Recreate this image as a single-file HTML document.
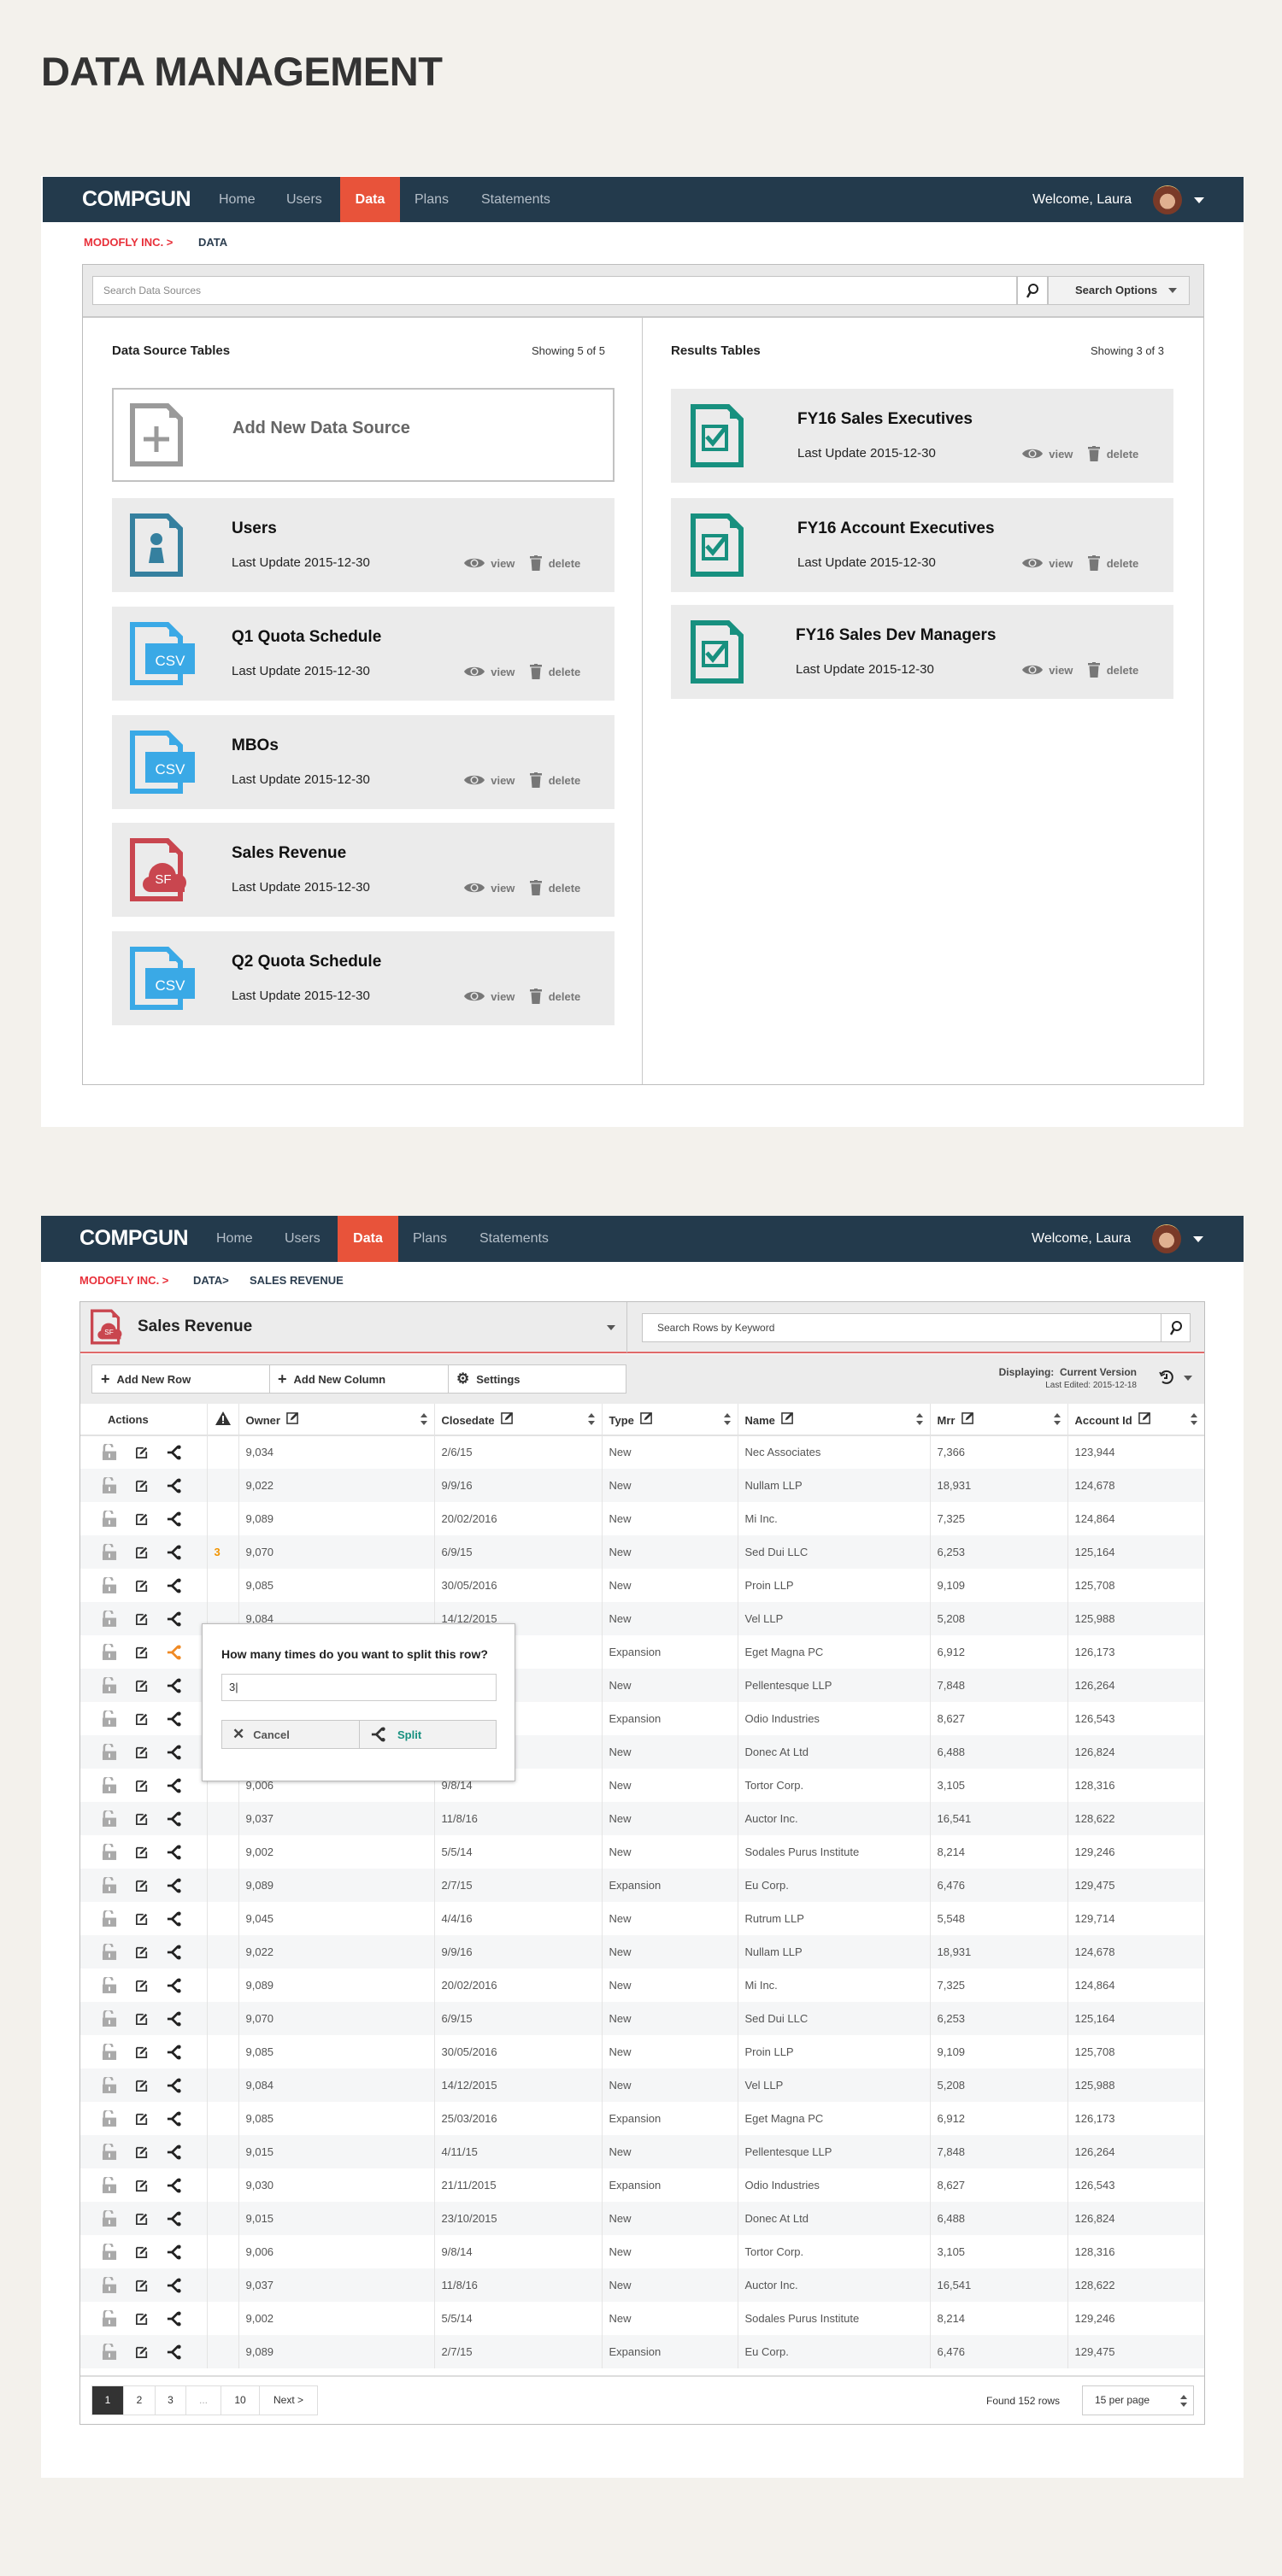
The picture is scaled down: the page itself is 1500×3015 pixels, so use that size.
<!DOCTYPE html>
<html><head><meta charset="utf-8">
<style>
*{box-sizing:border-box;margin:0;padding:0}
body{width:1500px;height:3015px;background:#f3f1ec;font-family:"Liberation Sans",Arial,sans-serif;position:relative;overflow:hidden;color:#222}
.abs{position:absolute}
h1{position:absolute;left:48px;top:56px;font-size:47px;font-weight:bold;color:#333;letter-spacing:-0.5px}
.panel{position:absolute;background:#fff}
.nav{position:absolute;height:53px;background:#233a4c}
.nav .it{position:absolute;top:0;height:53px;line-height:53px;font-size:16px;color:#b4bec8}
.nav .act{background:#e8533a;color:#fff;font-weight:bold;text-align:center}
.logo{position:absolute;top:0;line-height:53px;font-size:25px;font-weight:bold;color:#fff;letter-spacing:-0.5px}
.welcome{position:absolute;line-height:53px;top:0;font-size:16px;color:#fff}
.caret{position:absolute;width:0;height:0;border-left:6px solid transparent;border-right:6px solid transparent;border-top:7px solid #fff}
.bc{position:absolute;font-size:13px;font-weight:bold;color:#2c3e50}
.bc .r{color:#e8303a}
.card{position:absolute;width:588px;height:110px;background:#ebebeb}
.card .ic{position:absolute;left:21px;top:18px}
.card .t{position:absolute;left:140px;top:25px;font-size:19px;font-weight:bold;color:#111}
.card .u{position:absolute;left:140px;top:67px;font-size:15px;color:#222}
.card .v{position:absolute;left:412px;top:67px;font-size:13px;color:#777;font-weight:bold;display:flex;align-items:center}
.tbl{position:absolute;left:94px;top:1643px;border-collapse:collapse;table-layout:fixed;font-size:13px;color:#555}
.tbl td{height:39px;border-left:1px solid #e4e4e4;padding-left:8px;white-space:nowrap;overflow:hidden}
.tbl tr:nth-child(odd) td{background:#f5f6f7}
.tbl tr.h td{background:#fff;height:37px;font-weight:bold;color:#333;border-bottom:2px solid #e2e2e2;position:relative}
.tbl td:first-child{border-left:none}
.hd{display:flex;align-items:center;justify-content:space-between;padding-right:8px}
.acts{display:flex;align-items:center;gap:22px;padding-left:18px}
.btn{position:absolute;background:#fff;border:1px solid #c8c8c8;font-size:13px;font-weight:bold;color:#333;display:flex;align-items:center}
</style></head><body>
<svg width="0" height="0" style="position:absolute">
<defs>
<symbol id="lock" viewBox="0 0 18 20"><path d="M3 9V4a5 5 0 0 1 10 0" fill="none" stroke="#aaa" stroke-width="2.6" transform="translate(-1 0)"/><rect x="0" y="9" width="17" height="11" fill="#aaa"/><rect x="7.5" y="12" width="2" height="5" fill="#fff"/></symbol>
<symbol id="edit" viewBox="0 0 16 16"><path d="M1 2h9M1 2v13h13V7" fill="none" stroke="#333" stroke-width="2"/><path d="M5 11l1-3 7-7 2 2-7 7z" fill="#333"/></symbol>
<symbol id="split" viewBox="0 0 20 20"><path d="M15 2L7 10l8 8" fill="none" stroke="currentColor" stroke-width="3"/><path d="M1 10h7" stroke="currentColor" stroke-width="3"/><circle cx="16" cy="3" r="2.5" fill="currentColor"/><circle cx="16" cy="17" r="2.5" fill="currentColor"/></symbol>
<symbol id="pen" viewBox="0 0 16 16"><rect x="1" y="2" width="13" height="13" fill="none" stroke="#333" stroke-width="1.6"/><path d="M5 11l1-3 7-7 2 2-7 7z" fill="#333"/></symbol>
<symbol id="sort" viewBox="0 0 8 14"><path d="M4 0l4 5H0zM4 14l4-5H0z" fill="#555"/></symbol>
<symbol id="eye" viewBox="0 0 24 14"><path d="M0 7C4 0 20 0 24 7 20 14 4 14 0 7z" fill="#777"/><circle cx="12" cy="7" r="4.5" fill="#ebebeb"/><circle cx="12" cy="7" r="3" fill="#777"/></symbol>
<symbol id="trash" viewBox="0 0 14 18"><rect x="0" y="1" width="14" height="2.5" fill="#777"/><rect x="5" y="0" width="4" height="2" fill="#777"/><path d="M1.5 4.5h11l-1 13.5h-9z" fill="#777"/></symbol>
<symbol id="doc" viewBox="0 0 62 74"><path d="M3 3H44L59 18V71H3Z" fill="none" stroke="currentColor" stroke-width="6"/><path d="M46 8v9h9z" fill="currentColor"/></symbol>
</defs></svg>

<h1>DATA MANAGEMENT</h1>

<!-- PANEL 1 -->
<div class="panel" style="left:48px;top:206px;width:1407px;height:1113px"></div>
<div class="nav" style="left:50px;top:207px;width:1405px">
  <div class="logo" style="left:46px">COMPGUN</div>
  <div class="it" style="left:206px">Home</div>
  <div class="it" style="left:285px">Users</div>
  <div class="it act" style="left:348px;width:70px">Data</div>
  <div class="it" style="left:435px">Plans</div>
  <div class="it" style="left:513px">Statements</div>
  <div class="welcome" style="left:1158px">Welcome, Laura</div>
  <div class="abs" style="left:1299px;top:10px;width:34px;height:34px;border-radius:50%;background:radial-gradient(circle at 50% 55%,#e0b090 0 35%,#7a3a28 36% 70%,#e8c070 71%)"></div>
  <div class="caret" style="left:1347px;top:24px"></div>
</div>
<div class="bc" style="left:98px;top:276px"><span class="r">MODOFLY INC. &gt;</span><span style="position:absolute;left:134px">DATA</span></div>

<div class="abs" style="left:96px;top:309px;width:1313px;height:961px;border:1px solid #bdbdbd;background:#fff"></div>
<div class="abs" style="left:97px;top:310px;width:1311px;height:62px;background:#e9e9e9;border-bottom:2px solid #c9c9c9"></div>
<div class="abs" style="left:108px;top:323px;width:1082px;height:34px;background:#fff;border:1px solid #c4c4c4;font-size:12px;color:#888;line-height:32px;padding-left:12px">Search Data Sources</div>
<div class="abs" style="left:1190px;top:323px;width:36px;height:34px;background:#fff;border:1px solid #c4c4c4"><svg class="abs" style="left:9px;top:7px" width="16" height="20" viewBox="0 0 16 20"><circle cx="9" cy="7" r="5" fill="none" stroke="#222" stroke-width="2"/><path d="M5.5 11L2 17" stroke="#222" stroke-width="2.4"/></svg></div>
<div class="abs" style="left:1226px;top:323px;width:166px;height:34px;background:#f2f2f2;border:1px solid #c4c4c4;font-size:13px;font-weight:bold;color:#333;line-height:32px;padding-left:31px">Search Options<div class="caret" style="left:140px;top:13px;border-top-color:#555;border-width:6px 5px 0"></div></div>
<div class="abs" style="left:751px;top:372px;width:1px;height:897px;background:#c8c8c8"></div>

<div class="abs" style="left:131px;top:402px;font-size:15px;font-weight:bold">Data Source Tables</div>
<div class="abs" style="left:622px;top:403px;font-size:13px;color:#333">Showing 5 of 5</div>
<div class="abs" style="left:785px;top:402px;font-size:15px;font-weight:bold">Results Tables</div>
<div class="abs" style="left:1276px;top:403px;font-size:13px;color:#333">Showing 3 of 3</div>

<div class="card" style="left:131px;top:454px;background:#fff;border:2px solid #c2c2c2">
  <svg class="ic" style="left:19px;top:16px;color:#9a9a9a" width="62" height="74"><use href="#doc"/><path d="M16 42h30M31 27v30" stroke="#9a9a9a" stroke-width="5"/></svg>
  <div class="abs" style="left:139px;top:34px;font-size:20px;font-weight:bold;color:#666">Add New Data Source</div>
</div>

<div class="card" style="left:131px;top:583px">
  <svg class="ic" style="color:#35809f" width="62" height="74"><use href="#doc"/><circle cx="31" cy="30" r="7" fill="#35809f"/><path d="M22 58l3-18h12l3 18z" fill="#35809f"/></svg>
  <div class="t">Users</div><div class="u">Last Update 2015-12-30</div>
  <div class="v"><svg width="24" height="14"><use href="#eye"/></svg>&nbsp;&nbsp;view&nbsp;&nbsp;&nbsp;&nbsp;&nbsp;<svg width="14" height="18"><use href="#trash"/></svg>&nbsp;&nbsp;delete</div>
</div>
<div class="card" style="left:131px;top:710px">
  <svg class="ic" style="color:#3aa9e6" width="76" height="74"><use href="#doc" width="62" height="74"/><rect x="18" y="25" width="58" height="36" fill="#3aa9e6"/><text x="47" y="51" fill="#fff" font-size="17" text-anchor="middle" font-family="Liberation Sans">CSV</text></svg>
  <div class="t">Q1 Quota Schedule</div><div class="u">Last Update 2015-12-30</div>
  <div class="v"><svg width="24" height="14"><use href="#eye"/></svg>&nbsp;&nbsp;view&nbsp;&nbsp;&nbsp;&nbsp;&nbsp;<svg width="14" height="18"><use href="#trash"/></svg>&nbsp;&nbsp;delete</div>
</div>
<div class="card" style="left:131px;top:837px">
  <svg class="ic" style="color:#3aa9e6" width="76" height="74"><use href="#doc" width="62" height="74"/><rect x="18" y="25" width="58" height="36" fill="#3aa9e6"/><text x="47" y="51" fill="#fff" font-size="17" text-anchor="middle" font-family="Liberation Sans">CSV</text></svg>
  <div class="t">MBOs</div><div class="u">Last Update 2015-12-30</div>
  <div class="v"><svg width="24" height="14"><use href="#eye"/></svg>&nbsp;&nbsp;view&nbsp;&nbsp;&nbsp;&nbsp;&nbsp;<svg width="14" height="18"><use href="#trash"/></svg>&nbsp;&nbsp;delete</div>
</div>
<div class="card" style="left:131px;top:963px">
  <svg class="ic" style="color:#c9464f" width="76" height="74"><use href="#doc" width="62" height="74"/><circle cx="38" cy="45" r="16" fill="#c9464f"/><circle cx="56" cy="52" r="10" fill="#c9464f"/><circle cx="24" cy="54" r="9" fill="#c9464f"/><rect x="24" y="52" width="40" height="11" fill="#c9464f"/><text x="39" y="53" fill="#fff" font-size="15" text-anchor="middle" font-family="Liberation Sans">SF</text></svg>
  <div class="t">Sales Revenue</div><div class="u">Last Update 2015-12-30</div>
  <div class="v"><svg width="24" height="14"><use href="#eye"/></svg>&nbsp;&nbsp;view&nbsp;&nbsp;&nbsp;&nbsp;&nbsp;<svg width="14" height="18"><use href="#trash"/></svg>&nbsp;&nbsp;delete</div>
</div>
<div class="card" style="left:131px;top:1090px">
  <svg class="ic" style="color:#3aa9e6" width="76" height="74"><use href="#doc" width="62" height="74"/><rect x="18" y="25" width="58" height="36" fill="#3aa9e6"/><text x="47" y="51" fill="#fff" font-size="17" text-anchor="middle" font-family="Liberation Sans">CSV</text></svg>
  <div class="t">Q2 Quota Schedule</div><div class="u">Last Update 2015-12-30</div>
  <div class="v"><svg width="24" height="14"><use href="#eye"/></svg>&nbsp;&nbsp;view&nbsp;&nbsp;&nbsp;&nbsp;&nbsp;<svg width="14" height="18"><use href="#trash"/></svg>&nbsp;&nbsp;delete</div>
</div>

<div class="card" style="left:785px;top:455px">
  <svg class="ic" style="left:23px;color:#17907f" width="62" height="74"><use href="#doc"/><rect x="15" y="26" width="27" height="27" fill="none" stroke="#17907f" stroke-width="4"/><path d="M19 38l7 8 16-20" fill="none" stroke="#17907f" stroke-width="5"/></svg>
  <div class="t" style="left:148px">FY16 Sales Executives</div><div class="u" style="left:148px">Last Update 2015-12-30</div>
  <div class="v" style="left:411px"><svg width="24" height="14"><use href="#eye"/></svg>&nbsp;&nbsp;view&nbsp;&nbsp;&nbsp;&nbsp;&nbsp;<svg width="14" height="18"><use href="#trash"/></svg>&nbsp;&nbsp;delete</div>
</div>
<div class="card" style="left:785px;top:583px">
  <svg class="ic" style="left:23px;color:#17907f" width="62" height="74"><use href="#doc"/><rect x="15" y="26" width="27" height="27" fill="none" stroke="#17907f" stroke-width="4"/><path d="M19 38l7 8 16-20" fill="none" stroke="#17907f" stroke-width="5"/></svg>
  <div class="t" style="left:148px">FY16 Account Executives</div><div class="u" style="left:148px">Last Update 2015-12-30</div>
  <div class="v" style="left:411px"><svg width="24" height="14"><use href="#eye"/></svg>&nbsp;&nbsp;view&nbsp;&nbsp;&nbsp;&nbsp;&nbsp;<svg width="14" height="18"><use href="#trash"/></svg>&nbsp;&nbsp;delete</div>
</div>
<div class="card" style="left:785px;top:708px">
  <svg class="ic" style="left:23px;color:#17907f" width="62" height="74"><use href="#doc"/><rect x="15" y="26" width="27" height="27" fill="none" stroke="#17907f" stroke-width="4"/><path d="M19 38l7 8 16-20" fill="none" stroke="#17907f" stroke-width="5"/></svg>
  <div class="t" style="left:146px">FY16 Sales Dev Managers</div><div class="u" style="left:146px">Last Update 2015-12-30</div>
  <div class="v" style="left:411px"><svg width="24" height="14"><use href="#eye"/></svg>&nbsp;&nbsp;view&nbsp;&nbsp;&nbsp;&nbsp;&nbsp;<svg width="14" height="18"><use href="#trash"/></svg>&nbsp;&nbsp;delete</div>
</div>

<!-- PANEL 2 -->
<div class="panel" style="left:48px;top:1423px;width:1407px;height:1477px"></div>
<div class="nav" style="left:48px;top:1423px;width:1407px;height:54px">
  <div class="logo" style="left:45px">COMPGUN</div>
  <div class="it" style="left:205px">Home</div>
  <div class="it" style="left:285px">Users</div>
  <div class="it act" style="left:347px;width:71px;height:54px">Data</div>
  <div class="it" style="left:435px">Plans</div>
  <div class="it" style="left:513px">Statements</div>
  <div class="welcome" style="left:1159px">Welcome, Laura</div>
  <div class="abs" style="left:1300px;top:10px;width:34px;height:34px;border-radius:50%;background:radial-gradient(circle at 50% 55%,#e0b090 0 35%,#7a3a28 36% 70%,#e8c070 71%)"></div>
  <div class="caret" style="left:1348px;top:24px"></div>
</div>
<div class="bc" style="left:93px;top:1491px"><span class="r">MODOFLY INC. &gt;</span><span style="position:absolute;left:133px;white-space:nowrap">DATA&gt;</span><span style="position:absolute;left:199px;white-space:nowrap">SALES REVENUE</span></div>

<div class="abs" style="left:93px;top:1523px;width:1317px;height:1315px;border:1px solid #bdbdbd;background:#fff"></div>
<div class="abs" style="left:94px;top:1524px;width:1315px;height:60px;background:#ececec;border-bottom:2px solid #e06a6a"></div>
<div class="abs" style="left:733px;top:1524px;width:1px;height:59px;background:#c8c8c8"></div>
<svg class="abs" style="left:106px;top:1532px;color:#c9464f" width="42" height="42" viewBox="0 0 76 74"><use href="#doc" width="62" height="74"/><circle cx="38" cy="45" r="16" fill="#c9464f"/><circle cx="56" cy="52" r="10" fill="#c9464f"/><circle cx="24" cy="54" r="9" fill="#c9464f"/><rect x="24" y="52" width="40" height="11" fill="#c9464f"/><text x="39" y="53" fill="#fff" font-size="15" text-anchor="middle" font-family="Liberation Sans">SF</text></svg>
<div class="abs" style="left:161px;top:1542px;font-size:19px;font-weight:bold;color:#222">Sales Revenue</div>
<div class="caret" style="left:710px;top:1551px;border-top-color:#555;border-width:6px 5px 0"></div>
<div class="abs" style="left:751px;top:1537px;width:608px;height:34px;background:#fff;border:1px solid #c4c4c4;font-size:12px;color:#444;line-height:32px;padding-left:17px">Search Rows by Keyword</div>
<div class="abs" style="left:1358px;top:1537px;width:35px;height:34px;background:#fff;border:1px solid #c4c4c4"><svg class="abs" style="left:9px;top:7px" width="16" height="20" viewBox="0 0 16 20"><circle cx="9" cy="7" r="5" fill="none" stroke="#222" stroke-width="2"/><path d="M5.5 11L2 17" stroke="#222" stroke-width="2.4"/></svg></div>

<div class="abs" style="left:94px;top:1585px;width:1315px;height:58px;background:#ececec"></div>
<div class="btn" style="left:107px;top:1597px;width:209px;height:34px;padding-left:10px"><span style="font-size:18px;margin-right:8px">+</span>Add New Row</div>
<div class="btn" style="left:315px;top:1597px;width:210px;height:34px;padding-left:9px"><span style="font-size:18px;margin-right:8px">+</span>Add New Column</div>
<div class="btn" style="left:524px;top:1597px;width:209px;height:34px;padding-left:9px"><span style="font-size:17px;margin-right:8px">&#9881;</span>Settings</div>
<div class="abs" style="left:1130px;top:1599px;width:200px;text-align:right;font-size:12px;font-weight:bold;color:#444">Displaying:&nbsp; Current Version</div>
<div class="abs" style="left:1130px;top:1616px;width:200px;text-align:right;font-size:10px;color:#444">Last Edited: 2015-12-18</div>
<svg class="abs" style="left:1356px;top:1603px" width="18" height="18" viewBox="0 0 18 18"><path d="M4 14A7 7 0 1 0 3 5" fill="none" stroke="#222" stroke-width="2"/><path d="M1 3l2 4 4-2" fill="none" stroke="#222" stroke-width="1.6"/><path d="M9 5v5H6" fill="none" stroke="#222" stroke-width="2"/></svg>
<div class="caret" style="left:1385px;top:1610px;border-top-color:#555;border-width:6px 5px 0"></div>

<table class="tbl">
<colgroup><col style="width:148px"><col style="width:37px"><col style="width:229px"><col style="width:196px"><col style="width:159px"><col style="width:225px"><col style="width:161px"><col style="width:160px"></colgroup>
<tr class="h"><td style="padding-left:32px">Actions</td><td style="padding-left:9px"><svg width="18" height="16" viewBox="0 0 18 16"><path d="M9 0l9 16H0z" fill="#333"/><rect x="8" y="5" width="2" height="6" fill="#fff"/><rect x="8" y="12" width="2" height="2" fill="#fff"/></svg></td>
<td><div class="hd"><span>Owner &nbsp;<svg width="15" height="15"><use href="#pen"/></svg></span><svg width="8" height="14"><use href="#sort"/></svg></div></td>
<td><div class="hd"><span>Closedate &nbsp;<svg width="15" height="15"><use href="#pen"/></svg></span><svg width="8" height="14"><use href="#sort"/></svg></div></td>
<td><div class="hd"><span>Type &nbsp;<svg width="15" height="15"><use href="#pen"/></svg></span><svg width="8" height="14"><use href="#sort"/></svg></div></td>
<td><div class="hd"><span>Name &nbsp;<svg width="15" height="15"><use href="#pen"/></svg></span><svg width="8" height="14"><use href="#sort"/></svg></div></td>
<td><div class="hd"><span>Mrr &nbsp;<svg width="15" height="15"><use href="#pen"/></svg></span><svg width="8" height="14"><use href="#sort"/></svg></div></td>
<td><div class="hd"><span>Account Id &nbsp;<svg width="15" height="15"><use href="#pen"/></svg></span><svg width="8" height="14"><use href="#sort"/></svg></div></td></tr>
<tbody>
<tr style="display:none"></tr>
</tbody>
</table>

<div id="rows"></div>
<table class="tbl" style="top:1680px">
<colgroup><col style="width:148px"><col style="width:37px"><col style="width:229px"><col style="width:196px"><col style="width:159px"><col style="width:225px"><col style="width:161px"><col style="width:160px"></colgroup>
<tr style="display:none"><td></td></tr>
<tr><td><div class="acts"><svg width="17" height="19"><use href="#lock"/></svg><svg width="14" height="14"><use href="#edit"/></svg><svg width="18" height="18" style="color:#222"><use href="#split"/></svg></div></td><td></td><td>9,034</td><td>2/6/15</td><td>New</td><td>Nec Associates</td><td>7,366</td><td>123,944</td></tr>
<tr><td><div class="acts"><svg width="17" height="19"><use href="#lock"/></svg><svg width="14" height="14"><use href="#edit"/></svg><svg width="18" height="18" style="color:#222"><use href="#split"/></svg></div></td><td></td><td>9,022</td><td>9/9/16</td><td>New</td><td>Nullam LLP</td><td>18,931</td><td>124,678</td></tr>
<tr><td><div class="acts"><svg width="17" height="19"><use href="#lock"/></svg><svg width="14" height="14"><use href="#edit"/></svg><svg width="18" height="18" style="color:#222"><use href="#split"/></svg></div></td><td></td><td>9,089</td><td>20/02/2016</td><td>New</td><td>Mi Inc.</td><td>7,325</td><td>124,864</td></tr>
<tr><td><div class="acts"><svg width="17" height="19"><use href="#lock"/></svg><svg width="14" height="14"><use href="#edit"/></svg><svg width="18" height="18" style="color:#222"><use href="#split"/></svg></div></td><td style="color:#f29400;font-weight:bold">3</td><td>9,070</td><td>6/9/15</td><td>New</td><td>Sed Dui LLC</td><td>6,253</td><td>125,164</td></tr>
<tr><td><div class="acts"><svg width="17" height="19"><use href="#lock"/></svg><svg width="14" height="14"><use href="#edit"/></svg><svg width="18" height="18" style="color:#222"><use href="#split"/></svg></div></td><td></td><td>9,085</td><td>30/05/2016</td><td>New</td><td>Proin LLP</td><td>9,109</td><td>125,708</td></tr>
<tr><td><div class="acts"><svg width="17" height="19"><use href="#lock"/></svg><svg width="14" height="14"><use href="#edit"/></svg><svg width="18" height="18" style="color:#222"><use href="#split"/></svg></div></td><td></td><td>9,084</td><td>14/12/2015</td><td>New</td><td>Vel LLP</td><td>5,208</td><td>125,988</td></tr>
<tr><td><div class="acts"><svg width="17" height="19"><use href="#lock"/></svg><svg width="14" height="14"><use href="#edit"/></svg><svg width="18" height="18" style="color:#f08a24"><use href="#split"/></svg></div></td><td></td><td>9,085</td><td>25/03/2016</td><td>Expansion</td><td>Eget Magna PC</td><td>6,912</td><td>126,173</td></tr>
<tr><td><div class="acts"><svg width="17" height="19"><use href="#lock"/></svg><svg width="14" height="14"><use href="#edit"/></svg><svg width="18" height="18" style="color:#222"><use href="#split"/></svg></div></td><td></td><td>9,015</td><td>4/11/15</td><td>New</td><td>Pellentesque LLP</td><td>7,848</td><td>126,264</td></tr>
<tr><td><div class="acts"><svg width="17" height="19"><use href="#lock"/></svg><svg width="14" height="14"><use href="#edit"/></svg><svg width="18" height="18" style="color:#222"><use href="#split"/></svg></div></td><td></td><td>9,030</td><td>21/11/2015</td><td>Expansion</td><td>Odio Industries</td><td>8,627</td><td>126,543</td></tr>
<tr><td><div class="acts"><svg width="17" height="19"><use href="#lock"/></svg><svg width="14" height="14"><use href="#edit"/></svg><svg width="18" height="18" style="color:#222"><use href="#split"/></svg></div></td><td></td><td>9,015</td><td>23/10/2015</td><td>New</td><td>Donec At Ltd</td><td>6,488</td><td>126,824</td></tr>
<tr><td><div class="acts"><svg width="17" height="19"><use href="#lock"/></svg><svg width="14" height="14"><use href="#edit"/></svg><svg width="18" height="18" style="color:#222"><use href="#split"/></svg></div></td><td></td><td>9,006</td><td>9/8/14</td><td>New</td><td>Tortor Corp.</td><td>3,105</td><td>128,316</td></tr>
<tr><td><div class="acts"><svg width="17" height="19"><use href="#lock"/></svg><svg width="14" height="14"><use href="#edit"/></svg><svg width="18" height="18" style="color:#222"><use href="#split"/></svg></div></td><td></td><td>9,037</td><td>11/8/16</td><td>New</td><td>Auctor Inc.</td><td>16,541</td><td>128,622</td></tr>
<tr><td><div class="acts"><svg width="17" height="19"><use href="#lock"/></svg><svg width="14" height="14"><use href="#edit"/></svg><svg width="18" height="18" style="color:#222"><use href="#split"/></svg></div></td><td></td><td>9,002</td><td>5/5/14</td><td>New</td><td>Sodales Purus Institute</td><td>8,214</td><td>129,246</td></tr>
<tr><td><div class="acts"><svg width="17" height="19"><use href="#lock"/></svg><svg width="14" height="14"><use href="#edit"/></svg><svg width="18" height="18" style="color:#222"><use href="#split"/></svg></div></td><td></td><td>9,089</td><td>2/7/15</td><td>Expansion</td><td>Eu Corp.</td><td>6,476</td><td>129,475</td></tr>
<tr><td><div class="acts"><svg width="17" height="19"><use href="#lock"/></svg><svg width="14" height="14"><use href="#edit"/></svg><svg width="18" height="18" style="color:#222"><use href="#split"/></svg></div></td><td></td><td>9,045</td><td>4/4/16</td><td>New</td><td>Rutrum LLP</td><td>5,548</td><td>129,714</td></tr>
<tr><td><div class="acts"><svg width="17" height="19"><use href="#lock"/></svg><svg width="14" height="14"><use href="#edit"/></svg><svg width="18" height="18" style="color:#222"><use href="#split"/></svg></div></td><td></td><td>9,022</td><td>9/9/16</td><td>New</td><td>Nullam LLP</td><td>18,931</td><td>124,678</td></tr>
<tr><td><div class="acts"><svg width="17" height="19"><use href="#lock"/></svg><svg width="14" height="14"><use href="#edit"/></svg><svg width="18" height="18" style="color:#222"><use href="#split"/></svg></div></td><td></td><td>9,089</td><td>20/02/2016</td><td>New</td><td>Mi Inc.</td><td>7,325</td><td>124,864</td></tr>
<tr><td><div class="acts"><svg width="17" height="19"><use href="#lock"/></svg><svg width="14" height="14"><use href="#edit"/></svg><svg width="18" height="18" style="color:#222"><use href="#split"/></svg></div></td><td></td><td>9,070</td><td>6/9/15</td><td>New</td><td>Sed Dui LLC</td><td>6,253</td><td>125,164</td></tr>
<tr><td><div class="acts"><svg width="17" height="19"><use href="#lock"/></svg><svg width="14" height="14"><use href="#edit"/></svg><svg width="18" height="18" style="color:#222"><use href="#split"/></svg></div></td><td></td><td>9,085</td><td>30/05/2016</td><td>New</td><td>Proin LLP</td><td>9,109</td><td>125,708</td></tr>
<tr><td><div class="acts"><svg width="17" height="19"><use href="#lock"/></svg><svg width="14" height="14"><use href="#edit"/></svg><svg width="18" height="18" style="color:#222"><use href="#split"/></svg></div></td><td></td><td>9,084</td><td>14/12/2015</td><td>New</td><td>Vel LLP</td><td>5,208</td><td>125,988</td></tr>
<tr><td><div class="acts"><svg width="17" height="19"><use href="#lock"/></svg><svg width="14" height="14"><use href="#edit"/></svg><svg width="18" height="18" style="color:#222"><use href="#split"/></svg></div></td><td></td><td>9,085</td><td>25/03/2016</td><td>Expansion</td><td>Eget Magna PC</td><td>6,912</td><td>126,173</td></tr>
<tr><td><div class="acts"><svg width="17" height="19"><use href="#lock"/></svg><svg width="14" height="14"><use href="#edit"/></svg><svg width="18" height="18" style="color:#222"><use href="#split"/></svg></div></td><td></td><td>9,015</td><td>4/11/15</td><td>New</td><td>Pellentesque LLP</td><td>7,848</td><td>126,264</td></tr>
<tr><td><div class="acts"><svg width="17" height="19"><use href="#lock"/></svg><svg width="14" height="14"><use href="#edit"/></svg><svg width="18" height="18" style="color:#222"><use href="#split"/></svg></div></td><td></td><td>9,030</td><td>21/11/2015</td><td>Expansion</td><td>Odio Industries</td><td>8,627</td><td>126,543</td></tr>
<tr><td><div class="acts"><svg width="17" height="19"><use href="#lock"/></svg><svg width="14" height="14"><use href="#edit"/></svg><svg width="18" height="18" style="color:#222"><use href="#split"/></svg></div></td><td></td><td>9,015</td><td>23/10/2015</td><td>New</td><td>Donec At Ltd</td><td>6,488</td><td>126,824</td></tr>
<tr><td><div class="acts"><svg width="17" height="19"><use href="#lock"/></svg><svg width="14" height="14"><use href="#edit"/></svg><svg width="18" height="18" style="color:#222"><use href="#split"/></svg></div></td><td></td><td>9,006</td><td>9/8/14</td><td>New</td><td>Tortor Corp.</td><td>3,105</td><td>128,316</td></tr>
<tr><td><div class="acts"><svg width="17" height="19"><use href="#lock"/></svg><svg width="14" height="14"><use href="#edit"/></svg><svg width="18" height="18" style="color:#222"><use href="#split"/></svg></div></td><td></td><td>9,037</td><td>11/8/16</td><td>New</td><td>Auctor Inc.</td><td>16,541</td><td>128,622</td></tr>
<tr><td><div class="acts"><svg width="17" height="19"><use href="#lock"/></svg><svg width="14" height="14"><use href="#edit"/></svg><svg width="18" height="18" style="color:#222"><use href="#split"/></svg></div></td><td></td><td>9,002</td><td>5/5/14</td><td>New</td><td>Sodales Purus Institute</td><td>8,214</td><td>129,246</td></tr>
<tr><td><div class="acts"><svg width="17" height="19"><use href="#lock"/></svg><svg width="14" height="14"><use href="#edit"/></svg><svg width="18" height="18" style="color:#222"><use href="#split"/></svg></div></td><td></td><td>9,089</td><td>2/7/15</td><td>Expansion</td><td>Eu Corp.</td><td>6,476</td><td>129,475</td></tr>
</table>

<!-- popup -->
<div class="abs" style="left:236px;top:1900px;width:367px;height:185px;background:#fff;border:1px solid #bbb;box-shadow:0 1px 4px rgba(0,0,0,.25)">
  <div class="abs" style="left:22px;top:27px;font-size:14px;font-weight:bold;color:#222">How many times do you want to split this row?</div>
  <div class="abs" style="left:22px;top:58px;width:322px;height:32px;border:1px solid #ccc;font-size:13px;color:#333;line-height:30px;padding-left:8px">3|</div>
  <div class="btn" style="left:22px;top:112px;width:162px;height:34px;background:#f2f2f2;color:#555;padding-left:12px"><span style="font-size:17px;margin-right:10px;color:#444">&#10005;</span>Cancel</div>
  <div class="btn" style="left:183px;top:112px;width:161px;height:34px;background:#f2f2f2;color:#17907f;padding-left:12px"><svg width="20" height="18" style="color:#333;margin-right:12px"><use href="#split"/></svg>Split</div>
</div>

<!-- pagination -->
<div class="abs" style="left:94px;top:2780px;width:1315px;height:2px;background:#ddd"></div>
<div class="abs" style="left:107px;top:2792px;height:35px;display:flex;font-size:12px;color:#333;border:1px solid #ddd;background:#fff">
  <div style="width:36px;background:#333;color:#fff;text-align:center;line-height:33px">1</div>
  <div style="width:37px;text-align:center;line-height:33px;border-left:1px solid #ddd">2</div>
  <div style="width:36px;text-align:center;line-height:33px;border-left:1px solid #ddd">3</div>
  <div style="width:41px;text-align:center;line-height:33px;border-left:1px solid #ddd;color:#aaa">...</div>
  <div style="width:45px;text-align:center;line-height:33px;border-left:1px solid #ddd">10</div>
  <div style="width:68px;text-align:center;line-height:33px;border-left:1px solid #ddd">Next &gt;</div>
</div>
<div class="abs" style="left:1154px;top:2803px;font-size:12px;color:#333">Found 152 rows</div>
<div class="abs" style="left:1266px;top:2792px;width:131px;height:35px;border:1px solid #ccc;background:#fff;font-size:12px;color:#333;line-height:33px;padding-left:14px">15 per page<svg class="abs" style="left:114px;top:10px" width="8" height="14"><use href="#sort"/></svg></div>
</body></html>
